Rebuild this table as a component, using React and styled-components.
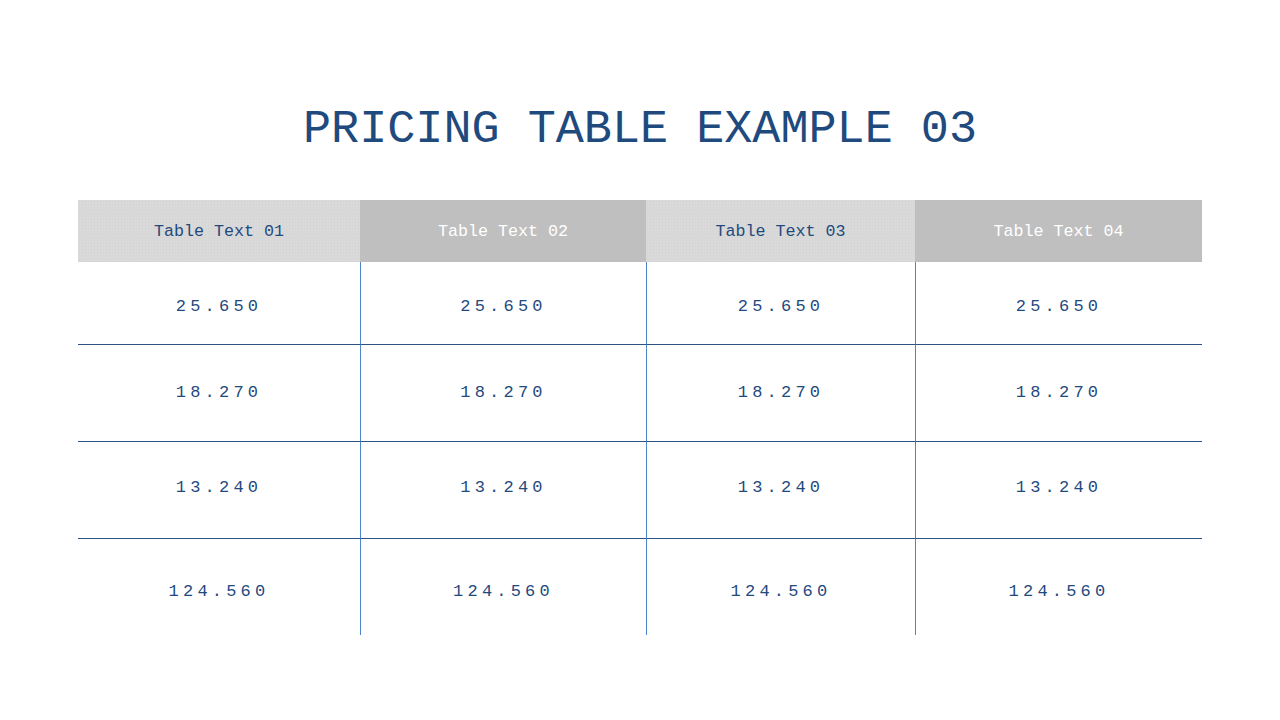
import React from "react";
import styled, { createGlobalStyle } from "styled-components";

const Global = createGlobalStyle`
  html, body { margin: 0; padding: 0; background: #ffffff; }
  body { font-family: "Liberation Mono", "DejaVu Sans Mono", monospace; }
`;

const Page = styled.div`
  width: 1280px;
  height: 720px;
  display: flex;
  flex-direction: column;
  align-items: center;
  padding-top: 102px;
  box-sizing: border-box;
`;

const Title = styled.h1`
  margin: 0 0 42px;
  font-family: "Liberation Mono", monospace;
  font-weight: 400;
  font-size: 46.8px;
  line-height: 56px;
  color: #1f4a7e;
  letter-spacing: 0;
`;

const Grid = styled.div`
  display: grid;
  grid-template-columns: 282px 286px 269px 287px;
  grid-template-rows: 62px 82px 97px 97px 97px;
  width: 1124px;
`;

const Head = styled.div`
  display: flex;
  align-items: center;
  justify-content: center;
  font-size: 16.7px;
  color: ${(p) => (p.$dark ? "#ffffff" : "#1f4a7e")};
  background-color: ${(p) => (p.$dark ? "#bfbfbf" : "#d9d9d9")};
  background-image: ${(p) =>
    p.$dark
      ? "none"
      : "radial-gradient(rgba(0,0,0,0.03) 0.6px, transparent 0.7px)"};
  background-size: 3px 3px;
`;

const Cell = styled.div`
  position: relative;
  display: flex;
  align-items: center;
  justify-content: center;
  font-size: 17px;
  letter-spacing: 4.2px;
  color: #1f4a7e;
  border-left: ${(p) => (p.$first ? "none" : "1px solid #4a86c8")};
  border-top: ${(p) => (p.$topLine ? "1px solid #2a5384" : "none")};
  padding-top: ${(p) => p.$pt || 0}px;
  padding-bottom: ${(p) => p.$pb || 0}px;
  box-sizing: border-box;
`;

const headers = ["Table Text 01", "Table Text 02", "Table Text 03", "Table Text 04"];
const rows = [
  { v: "25.650", pt: 6, pb: 0 },
  { v: "18.270", pt: 0, pb: 2 },
  { v: "13.240", pt: 0, pb: 6 },
  { v: "124.560", pt: 8, pb: 0 },
];

export default function App() {
  return (
    <>
      <Global />
      <Page>
        <Title>PRICING TABLE EXAMPLE 03</Title>
        <Grid>
          {headers.map((h, i) => (
            <Head key={h} $dark={i % 2 === 1}>
              {h}
            </Head>
          ))}
          {rows.map((r, ri) =>
            headers.map((_, ci) => (
              <Cell
                key={`${ri}-${ci}`}
                $first={ci === 0}
                $topLine={ri > 0}
                $pt={r.pt}
                $pb={r.pb}
              >
                {r.v}
              </Cell>
            ))
          )}
        </Grid>
      </Page>
    </>
  );
}
